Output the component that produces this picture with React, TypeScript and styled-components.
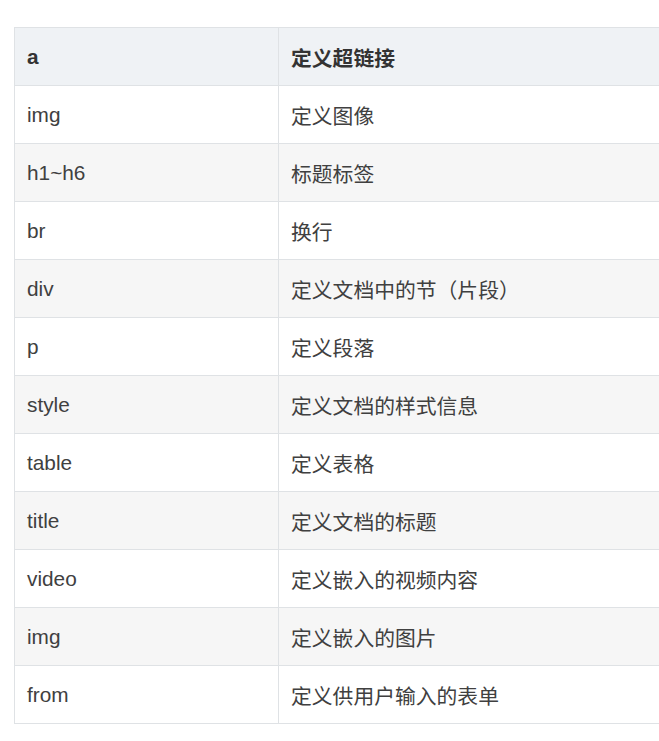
import React from "react";
import styled, { createGlobalStyle } from "styled-components";

const Global = createGlobalStyle`
  html, body { margin: 0; padding: 0; overflow: hidden; background: #fff; }
  body { font-family: "Liberation Sans", Arial, "Noto Sans CJK SC", sans-serif; }
`;

const Page = styled.div`
  padding: 27px 0 0 14px;
  width: 760px;
`;

const Table = styled.table`
  border-collapse: collapse;
  width: 720px;
  table-layout: fixed;
  font-size: 20.8px;
  color: #404040;
`;

const HeadCell = styled.th<{ $w?: number }>`
  text-align: left;
  font-weight: bold;
  color: #333;
  background: #eff2f5;
  border: 1px solid #dfe2e5;
  height: 58px;
  padding: 0 12px;
  box-sizing: border-box;
  ${(p) => (p.$w ? `width: ${p.$w}px;` : "")}
`;

const Row = styled.tr<{ $alt: boolean }>`
  background: ${(p) => (p.$alt ? "#f6f6f6" : "#fff")};
`;

const Cell = styled.td`
  border: 1px solid #dfe2e5;
  height: 58px;
  padding: 0 12px;
  box-sizing: border-box;
  white-space: nowrap;
`;

const rows: [string, string][] = [
  ["img", "定义图像"],
  ["h1~h6", "标题标签"],
  ["br", "换行"],
  ["div", "定义文档中的节（片段）"],
  ["p", "定义段落"],
  ["style", "定义文档的样式信息"],
  ["table", "定义表格"],
  ["title", "定义文档的标题"],
  ["video", "定义嵌入的视频内容"],
  ["img", "定义嵌入的图片"],
  ["from", "定义供用户输入的表单"],
];

export default function App() {
  return (
    <>
      <Global />
      <Page>
        <Table>
          <thead>
            <tr>
              <HeadCell $w={264}>a</HeadCell>
              <HeadCell>定义超链接</HeadCell>
            </tr>
          </thead>
          <tbody>
            {rows.map(([tag, desc], i) => (
              <Row key={i} $alt={i % 2 === 1}>
                <Cell>{tag}</Cell>
                <Cell>{desc}</Cell>
              </Row>
            ))}
          </tbody>
        </Table>
      </Page>
    </>
  );
}
